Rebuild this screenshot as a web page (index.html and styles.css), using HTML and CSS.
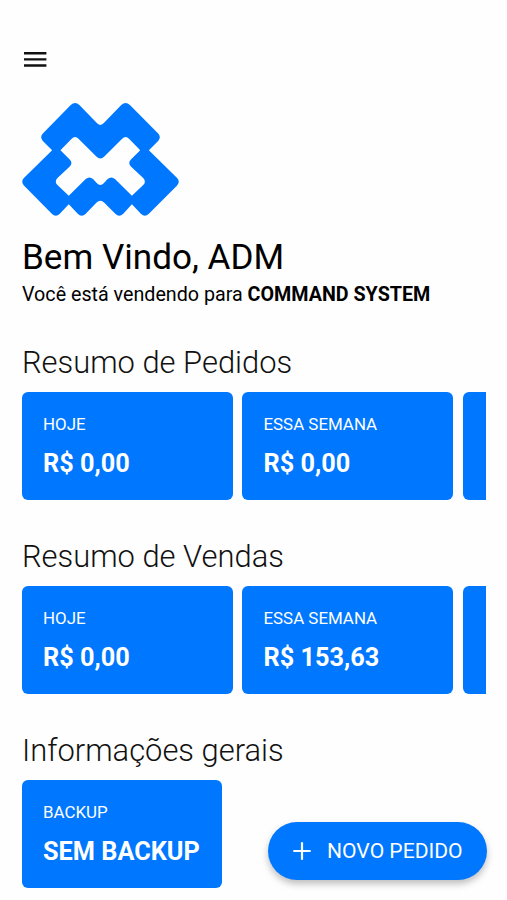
FILE: index.html
```
<!DOCTYPE html>
<html lang="pt-BR">
<head>
    <meta charset="UTF-8">
    <meta name="viewport" content="width=device-width, initial-scale=1.0">
    <title>Command System</title>
    <link rel="stylesheet" href="styles.css">
</head>
<body>
    <main class="tela">
        <header>
            <button class="menu" aria-label="Menu">
                <svg viewBox="0 0 26 16" aria-hidden="true">
                    <path d="M2 2.3H24.4M2 8.4H24.4M2 14.5H24.4" stroke="#111" stroke-width="2.4"/>
                </svg>
            </button>
            <svg class="logo" viewBox="36 189 471 340" aria-hidden="true">
                <path fill="#0077ff" fill-rule="evenodd" d="M182 195Q195 183 208 195L259 248Q271 262 283 248L334 195Q347 183 360 195L445 281Q455 292 445 303L417 331L502 415Q512 426 502 437L417 522Q405 534 393 522L366 494L340 522Q328 534 316 522L283 489Q271 477 259 489L227 522Q215 534 203 522L176 494L149 522Q137 534 125 522L41 437Q31 426 41 415L126 331L98 303Q88 292 98 281Z
                M184 297Q195 286 206 297L259 350Q271 362 283 350L336 297Q347 286 358 297L391 331L363 359Q353 370 363 380L400 415Q410 426 400 436L366 468L315 418Q304 408 293 418L282 430Q271 442 260 430L249 418Q238 408 227 418L176 468L142 436Q132 426 142 415L179 380Q189 370 179 359L151 331Z"/>
            </svg>
            <h1>Bem Vindo, ADM</h1>
            <p class="empresa">Você está vendendo para <b>COMMAND SYSTEM</b></p>
        </header>

        <section>
            <h2>Resumo de Pedidos</h2>
            <div class="cards">
                <div class="card">
                    <span class="rotulo">HOJE</span>
                    <strong class="valor">R$ 0,00</strong>
                </div>
                <div class="card">
                    <span class="rotulo">ESSA SEMANA</span>
                    <strong class="valor">R$ 0,00</strong>
                </div>
                <div class="card"></div>
            </div>
        </section>

        <section>
            <h2>Resumo de Vendas</h2>
            <div class="cards">
                <div class="card">
                    <span class="rotulo">HOJE</span>
                    <strong class="valor">R$ 0,00</strong>
                </div>
                <div class="card">
                    <span class="rotulo">ESSA SEMANA</span>
                    <strong class="valor">R$ 153,63</strong>
                </div>
                <div class="card"></div>
            </div>
        </section>

        <section>
            <h2>Informações gerais</h2>
            <div class="cards">
                <div class="card card-backup">
                    <span class="rotulo">BACKUP</span>
                    <strong class="valor">SEM BACKUP</strong>
                </div>
            </div>
        </section>
    </main>

    <button class="novo-pedido">
        <svg viewBox="0 0 18 18" aria-hidden="true">
            <path d="M9 0.3V17.7M0.3 9H17.7" stroke="#fff" stroke-width="2.2"/>
        </svg>
        NOVO PEDIDO
    </button>
</body>
</html>
```
FILE: styles.css
```
* {
    box-sizing: border-box;
}

body {
    margin: 0;
    height: 900px;
    overflow: hidden;
    background-color: #fefefe;
    color: #000;
    font-family: Roboto, sans-serif;
}

.tela {
    padding: 51px 21px 0 22px;
}

h1, h2, p {
    margin: 0;
    white-space: nowrap;
}

button {
    border: 0;
    font-family: inherit;
}

.menu {
    display: block;
    width: 26px;
    height: 16px;
    padding: 0;
    background: none;
}

.menu svg {
    display: block;
}

.logo {
    display: block;
    width: 157px;
    height: 113px;
    margin-top: 36px;
}

h1 {
    margin-top: 21px;
    font-size: 35.1px;
    font-weight: 400;
    line-height: 40px;
}

.empresa {
    height: 23px;
    margin-top: 6px;
    font-size: 19.7px;
    line-height: 24px;
}

section {
    margin-top: 38px;
}

h2 {
    height: 48px;
    font-size: 30.9px;
    font-weight: 300;
    line-height: 38px;
    color: #111;
}

.cards {
    display: flex;
    gap: 9.7px;
    overflow: hidden;
}

.card {
    display: flex;
    flex-direction: column;
    flex: none;
    width: 210.8px;
    height: 107.8px;
    margin-bottom: 0.2px;
    padding: 22px 21px;
    border-radius: 6px;
    background-color: #0077ff;
    color: #fff;
}

.card-backup {
    width: 200px;
}

.rotulo {
    font-size: 16.9px;
    line-height: 20px;
}

.valor {
    margin-top: 15px;
    font-size: 25.3px;
    line-height: 30px;
    white-space: nowrap;
}

.novo-pedido {
    position: absolute;
    right: 20px;
    bottom: 20px;
    display: flex;
    align-items: center;
    width: 219px;
    height: 58.5px;
    padding: 0 0 0 25px;
    gap: 16px;
    border-radius: 30px;
    background-color: #0077ff;
    box-shadow: 0 4px 7px rgba(0, 0, 0, 0.25);
    color: #fff;
    font-size: 21.1px;
    white-space: nowrap;
}

.novo-pedido svg {
    width: 18px;
    height: 18px;
}
```
